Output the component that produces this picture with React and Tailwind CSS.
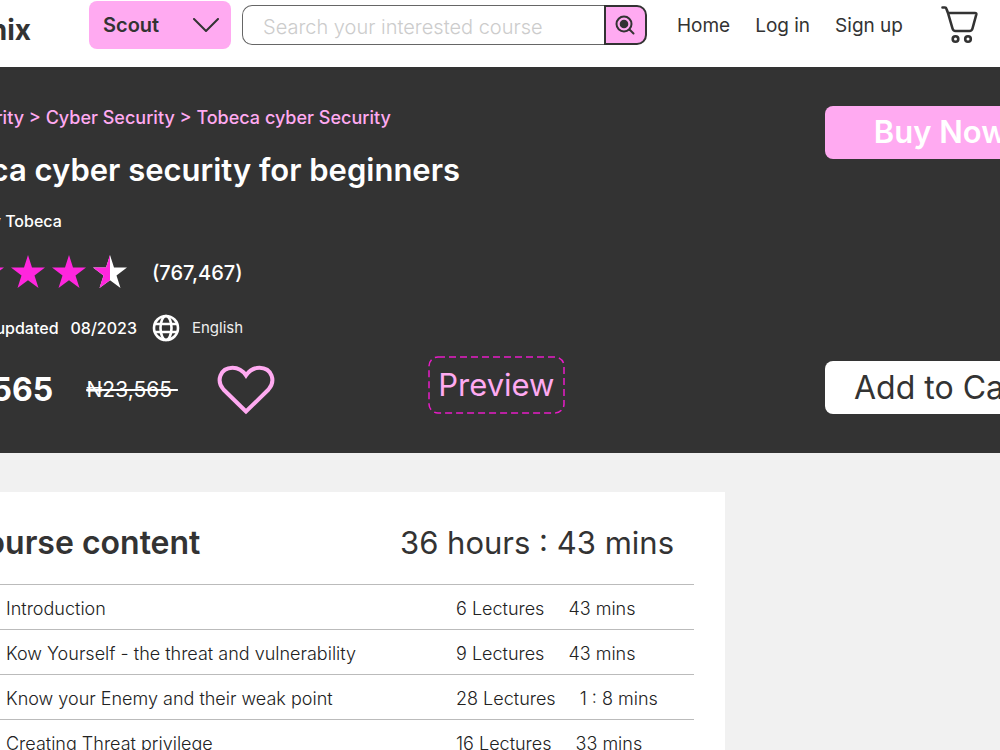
import { useState } from 'react';
import { LuChevronDown } from 'react-icons/lu';

const links = ['Home', 'Log in', 'Sign up'];

const sections = [
  { title: 'Introduction', lectures: '6 Lectures', time: '43 mins' },
  { title: 'Kow Yourself - the threat and vulnerability', lectures: '9 Lectures', time: '43 mins' },
  { title: 'Know your Enemy and their weak point', lectures: '28 Lectures', time: '1 : 8 mins' },
  { title: 'Creating Threat privilege', lectures: '16 Lectures', time: '33 mins' }
];

const STAR = 'M17 0 L21 12.5 H34 L23.5 20.5 L27.5 33 L17 25.2 L6.5 33 L10.5 20.5 L0 12.5 H13 Z';

function Star({ half }) {
  return (
    <svg viewBox="0 0 34 33" className="w-[34px] h-[33px]" aria-hidden="true">
      <path d={STAR} fill={half ? '#ffffff' : '#ff26dd'} />
      {half && <path d="M17 0 L13 12.5 H0 L10.5 20.5 L6.5 33 L17 25.2 Z" fill="#ff26dd" />}
    </svg>
  );
}

function Header() {
  const [query, setQuery] = useState('');

  return (
    <header className="flex h-[67px] items-start bg-white pl-7 pr-[106px]">
      <a href="#home" className="w-[145px] pt-[9px] pr-[58px] text-right text-[28px] leading-[42px] font-bold">nix</a>

      <div className="relative mt-px w-[142px] shrink-0">
        <select aria-label="Scout" className="h-12 w-full appearance-none rounded-lg bg-[#ffaaf1] px-[14px] text-xl font-semibold">
          <option>Scout</option>
        </select>
        <svg viewBox="0 0 26 14" className="pointer-events-none absolute right-3 top-[17px] w-[26px] h-[14px]" fill="none" stroke="#333333" strokeWidth="2" strokeLinecap="round" strokeLinejoin="round">
          <path d="M1 1 L13 13 L25 1" />
        </svg>
      </div>

      <form className="mt-[5px] ml-[11px] flex h-[40px] flex-1" role="search" onSubmit={(e) => e.preventDefault()}>
        <input
          type="search"
          aria-label="Search courses"
          placeholder="Search your interested course"
          value={query}
          onChange={(e) => setQuery(e.target.value)}
          className="min-w-0 flex-1 rounded-l-[10px] border border-r-0 border-[#666666] px-5 pt-1 text-xl font-light outline-none placeholder:text-[#cccccc]"
        />
        <button type="submit" aria-label="Search" className="flex w-[43px] items-center justify-center rounded-r-[10px] border-2 border-[#333333] bg-[#ffaaf1]">
          <svg viewBox="0 0 20 20" className="size-5" fill="none" stroke="#333333" strokeWidth="2" strokeLinecap="round">
            <circle cx="9" cy="9" r="7.5" />
            <circle cx="9" cy="9" r="4.3" fill="#333333" stroke="none" />
            <path d="M14.5 14.5 L18.5 18.5" />
          </svg>
        </button>
      </form>

      <nav className="ml-[30px] flex gap-[25px] pt-[11px] text-[19px] leading-[30px]">
        {links.map(link => <a key={link} href="#nav">{link}</a>)}
      </nav>

      <button aria-label="Cart" className="mt-[6px] ml-[38px]">
        <svg viewBox="0 0 37 38" className="w-[37px] h-[38px]" fill="none" stroke="#333333" strokeWidth="2.6" strokeLinecap="round" strokeLinejoin="round">
          <path d="M1.5 1.5 H4 Q5 1.500 5.500 3 L7 7 L11.500 22.500 Q12.200 25 14.500 25 H28.500 Q30.800 25 31.500 22.500 L35.300 8.500 Q35.600 7 34 7 H7" />
          <circle cx="14.5" cy="33" r="2.800" />
          <circle cx="27" cy="33" r="2.800" />
        </svg>
      </button>
    </header>
  );
}

function Hero() {
  return (
    <section className="flex h-[386px] justify-between bg-[#333333] pr-7 text-white">
      <div className="min-w-0">
        <nav aria-label="Breadcrumb" className="mt-[37px] pl-9 text-lg leading-7 font-medium text-[#ffaaf1]">
          <a href="#security">Security</a> &gt; <a href="#cyber">Cyber Security</a> &gt; <a href="#course">Tobeca cyber Security</a>
        </nav>
        <h1 className="mt-[18px] text-[31px] leading-10 font-semibold">Tobeca cyber security for beginners</h1>
        <p className="mt-[19px] pl-px text-base leading-6 font-medium">Created by Tobeca</p>

        <div className="mt-[22px] flex items-center gap-[7px] pl-[13px]">
          <Star />
          <Star />
          <Star />
          <Star />
          <Star half />
          <span className="ml-[18px] pt-[2px] text-xl font-medium">(767,467)</span>
        </div>

        <div className="mt-[26px] flex items-center pl-[43px] text-base leading-7 font-medium">
          <span>Last updated</span>
          <span className="ml-3">08/2023</span>
          <svg viewBox="0 0 28 28" className="ml-[15px] size-7" fill="none" stroke="#ffffff" strokeWidth="2.6">
            <circle cx="14" cy="14" r="12" />
            <ellipse cx="14" cy="14" rx="5.5" ry="12" />
            <path d="M3 10 H25 M3 18 H25" />
          </svg>
          <span className="ml-3 text-[15px] font-normal text-[#eeeeee]">English</span>
        </div>

        <div className="mt-[14px] flex h-[58px] items-center pl-[7px]">
          <div className="flex items-center pt-[10px]">
            <span className="text-[32px] font-bold">₦13,565</span>
            <s className="ml-[33px] text-[21px]">₦23,565&nbsp;</s>
            <button aria-label="Add to wishlist" className="ml-[39px]">
              <svg viewBox="0 0 58 50" className="w-[58px] h-[50px]" fill="none" stroke="#ffaaf1" strokeWidth="4">
                <path d="M29 46.500 L6.500 24.500 C-1 16 3 3 15.500 2.800 C22 2.800 26 6 29 10.500 C32 6 36 2.800 42.500 2.800 C55 3 59 16 51.500 24.500 Z" />
              </svg>
            </button>
          </div>
          <button className="relative ml-[153px] h-[58px] w-[137px] text-[31px] text-[#ffaaf1]">
            <svg className="absolute inset-0 size-full" fill="none" stroke="#e81cc7" strokeWidth="1.5" strokeDasharray="7 4" aria-hidden="true">
              <rect x="1" y="1" width="135" height="56" rx="9" />
            </svg>
            Preview
          </button>
        </div>
      </div>

      <div className="flex w-[231px] shrink-0 flex-col justify-between pt-[39px] pb-[39px]">
        <button className="h-[53px] rounded-lg bg-[#ffaaf1] text-[31px] font-semibold">Buy Now</button>
        <button className="h-[53px] rounded-lg bg-white text-[32px] text-[#333333]">Add to Cart</button>
      </div>
    </section>
  );
}

function CourseContent() {
  return (
    <section className="mt-[39px] w-full max-w-[809px] bg-white pr-[31px] pl-[46px]" aria-labelledby="content-heading">
      <div className="flex h-[92px] items-center justify-between pt-[10px] pr-5">
        <h2 id="content-heading" className="text-[32px] font-semibold">Course content</h2>
        <p className="text-[31px]">36 hours : 43 mins</p>
      </div>
      <ul>
        {sections.map(section => (
          <li key={section.title} className="border-t border-[#bbbbbb]">
            <button className="flex h-11 w-full items-center gap-6 pt-[3px] text-left text-lg font-light text-[#222222]">
              <LuChevronDown size={20} />
              <span className="flex-1">{section.title}</span>
              <span className="flex w-[238px] gap-6">
                <span>{section.lectures}</span>
                <span>{section.time}</span>
              </span>
            </button>
          </li>
        ))}
      </ul>
    </section>
  );
}

function App() {
  return (
    <div className="h-screen overflow-hidden bg-[#f1f1f1] font-['Inter',sans-serif] text-[#333333]">
      {/* The page is wider than the window on both sides */}
      <div className="-mx-[84px]">
        <Header />
        <Hero />
        <CourseContent />
      </div>
    </div>
  );
}

export default App;
